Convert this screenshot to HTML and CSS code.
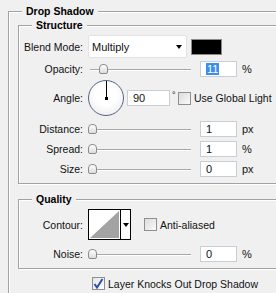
FILE: index.html
```html
<!DOCTYPE html>
<html lang="en">
<head>
    <meta charset="UTF-8">
    <title>Drop Shadow</title>
    <link rel="stylesheet" href="styles.css">
</head>
<body>

    <div class="group outer">
        <span class="group-title">Drop Shadow</span>

        <div class="group structure">
            <span class="group-title">Structure</span>

            <div class="row row-blend">
                <span class="label">Blend Mode:</span>
                <div class="select">
                    <span>Multiply</span>
                    <span class="arrow"></span>
                </div>
                <div class="swatch"></div>
            </div>

            <div class="row row-field">
                <span class="label">Opacity:</span>
                <div class="slider"><span class="thumb" style="left: 11px"></span></div>
                <div class="input"><span class="selected">11</span></div>
                <span class="unit">%</span>
            </div>

            <div class="row row-angle">
                <span class="label">Angle:</span>
                <div class="dial"><span class="needle"></span><span class="pin"></span></div>
                <div class="input input-angle">90</div>
                <span class="degree">°</span>
                <span class="check"></span>
                <span class="check-text">Use Global Light</span>
            </div>

            <div class="row row-field">
                <span class="label">Distance:</span>
                <div class="slider"><span class="thumb" style="left: 0px"></span></div>
                <div class="input">1</div>
                <span class="unit">px</span>
            </div>

            <div class="row row-field">
                <span class="label">Spread:</span>
                <div class="slider"><span class="thumb" style="left: 0px"></span></div>
                <div class="input">1</div>
                <span class="unit">%</span>
            </div>

            <div class="row row-field">
                <span class="label">Size:</span>
                <div class="slider"><span class="thumb" style="left: 0px"></span></div>
                <div class="input">0</div>
                <span class="unit">px</span>
            </div>
        </div>

        <div class="group quality">
            <span class="group-title">Quality</span>

            <div class="row row-contour">
                <span class="label">Contour:</span>
                <div class="contour">
                    <svg class="curve" width="31" height="29" viewBox="0 0 31 29">
                        <polygon points="1,28 30,1 30,28" fill="#a3a3a3"/>
                    </svg>
                    <span class="contour-drop"><span class="arrow"></span></span>
                </div>
                <span class="check check-aa"></span>
                <span class="check-text">Anti-aliased</span>
            </div>

            <div class="row row-field">
                <span class="label">Noise:</span>
                <div class="slider"><span class="thumb" style="left: 0px"></span></div>
                <div class="input">0</div>
                <span class="unit">%</span>
            </div>
        </div>

        <div class="row row-knock">
            <span class="check checked">
                <svg width="11" height="11" viewBox="0 0 11 11">
                    <path d="M1.5 6 L4 9.5 L9.5 1" fill="none" stroke="#2d4fa8" stroke-width="2"/>
                </svg>
            </span>
            <span class="check-text">Layer Knocks Out Drop Shadow</span>
        </div>
    </div>

</body>
</html>
```

FILE: styles.css
```css
* {
    box-sizing: border-box;
}

html, body {
    margin: 0;
    padding: 0;
    overflow: hidden;
}

body {
    font-family: 'Liberation Sans', Arial, sans-serif;
    font-size: 10.5px;
    color: #111;
    background-color: #f0f0f0;
    width: 276px;
    height: 293px;
}

.group {
    position: relative;
    border: 1px solid #a2a2a2;
    border-right: none;
    box-shadow: inset 1px 1px 0 #fff, 1px 1px 0 #fff;
}

.group-title {
    position: absolute;
    top: -7px;
    left: 13px;
    padding: 0 4px;
    background-color: #f0f0f0;
    font-weight: bold;
    line-height: 13px;
    color: #000;
}

.outer {
    margin: 11px 0 0 8px;
    width: 268px;
    height: 282px;
    border-bottom: none;
    padding: 13px 0 0 9px;
}

.structure {
    padding: 9px 0 6px 0;
}

.quality {
    margin-top: 15px;
    padding: 9px 0 6px 0;
}

.row {
    display: flex;
    align-items: center;
}

.label {
    width: 64px;
    margin-right: 5px;
    text-align: right;
}

.row-blend {
    height: 23px;
}

.row-field {
    height: 16px;
    margin-top: 4px;
}

.row-angle {
    height: 36px;
    margin-top: 3px;
}

.row-angle + .row-field {
    margin-top: 5px;
}

.row-blend + .row-field {
    margin-top: 3px;
}

/* blend mode */
.select {
    width: 99px;
    height: 23px;
    background-color: #fff;
    border: 1px solid #e2e2e2;
    border-radius: 2px;
    display: flex;
    align-items: center;
    justify-content: space-between;
    padding: 0 4px 0 3px;
    font-size: 11px;
}

.arrow {
    width: 0;
    height: 0;
    border-left: 3.5px solid transparent;
    border-right: 3.5px solid transparent;
    border-top: 4px solid #000;
}

.swatch {
    width: 31px;
    height: 16px;
    margin-left: 4px;
    background-color: #000;
    border: 1px solid #8a8a8a;
}

/* sliders */
.slider {
    position: relative;
    width: 103px;
    height: 16px;
    margin-right: 9px;
}

.slider::before {
    content: '';
    position: absolute;
    left: 2px;
    right: 0;
    top: 8px;
    height: 1px;
    background-color: #a8a8a8;
    box-shadow: 0 1px 0 #fff;
}

.thumb {
    position: absolute;
    top: 3px;
    width: 9px;
    height: 10px;
    background: linear-gradient(#ffffff, #dcdcdc);
    border: 1px solid #8c8c8c;
    border-radius: 4px 4px 2px 2px;
}

.input {
    width: 37px;
    height: 16px;
    background-color: #fff;
    border: 1px solid #c9ced6;
    padding-left: 5px;
    line-height: 14px;
    font-size: 11px;
}

.selected {
    background-color: #3b8fe8;
    color: #fff;
    padding: 0 1px;
}

.unit {
    margin-left: 5px;
    font-size: 11px;
}

/* angle */
.dial {
    position: relative;
    width: 36px;
    height: 36px;
    border: 1.5px solid #56638a;
    border-radius: 50%;
    background: radial-gradient(circle at 50% 40%, #ffffff 40%, #e6e6e6 100%);
}

.needle {
    position: absolute;
    left: 16.5px;
    top: 0;
    width: 1px;
    height: 17px;
    background-color: #000;
}

.pin {
    position: absolute;
    left: 15.5px;
    top: 15.5px;
    width: 3px;
    height: 3px;
    background-color: #000;
}

.input-angle {
    width: 43px;
    margin-left: 3px;
}

.degree {
    align-self: flex-start;
    width: 5px;
    margin: 10px 0 0 2px;
    font-size: 9px;
}

.check {
    width: 13px;
    height: 13px;
    margin-left: 1px;
    margin-right: 3px;
    border: 1px solid #8e8f8f;
    background: linear-gradient(135deg, #dcdcdc, #fafafa);
    display: flex;
    align-items: center;
    justify-content: center;
}

.check-text {
    white-space: nowrap;
}

/* contour */
.row-contour {
    height: 31px;
}

.contour {
    display: flex;
    width: 43px;
    height: 31px;
    border: 1px solid #000;
    background-color: #fff;
}

.curve {
    display: block;
}

.contour-drop {
    width: 10px;
    border-left: 1px solid #000;
    display: flex;
    align-items: center;
    justify-content: center;
}

.row-contour .check-aa {
    margin-left: 13px;
}

.quality .row-field {
    margin-top: 6px;
}

.row-knock {
    margin-top: 8px;
    height: 13px;
}

.row-knock .check {
    margin-left: 74px;
    background: linear-gradient(135deg, #e4e4e4, #ffffff);
}
```
